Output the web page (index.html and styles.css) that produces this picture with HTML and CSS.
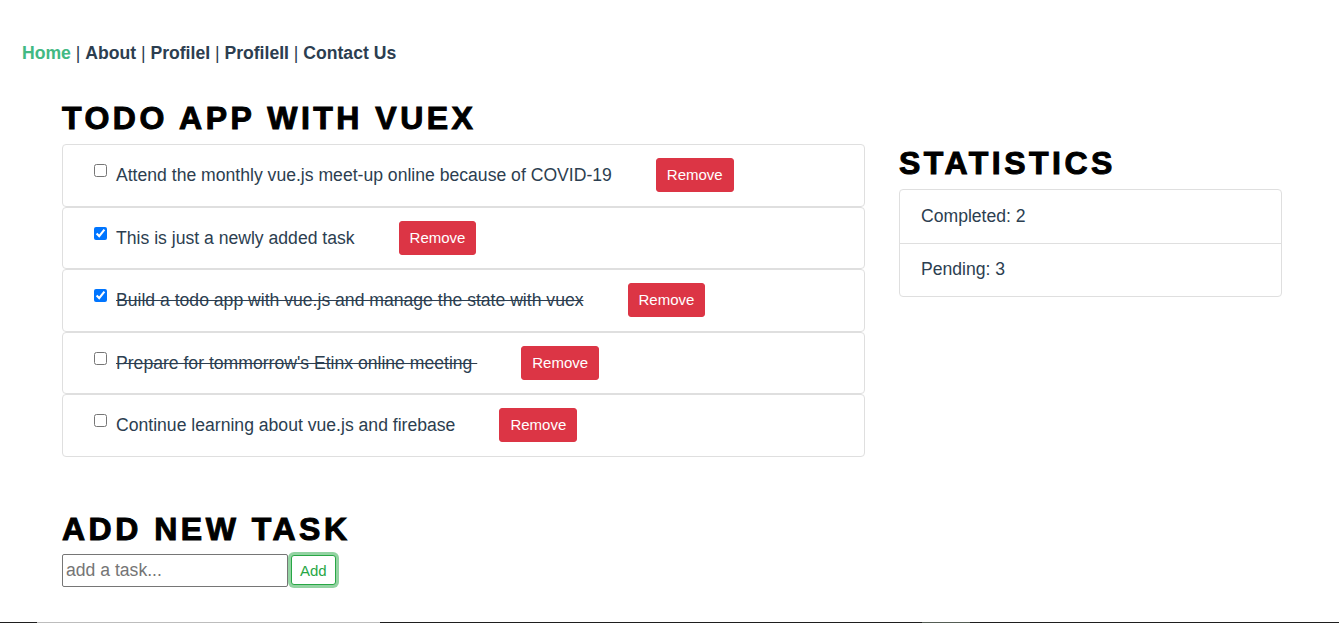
FILE: index.html
```html
<!DOCTYPE html>
<html lang="en">
<head>
<meta charset="utf-8">
<title>Todo App with Vuex</title>
<link rel="stylesheet" href="styles.css">
</head>
<body>
<div class="page">
  <nav class="nav">
    <a href="#" class="nav-link active">Home</a> | <a href="#" class="nav-link">About</a> | <a href="#" class="nav-link">ProfileI</a> | <a href="#" class="nav-link">ProfileII</a> | <a href="#" class="nav-link">Contact Us</a>
  </nav>

  <main class="main">
    <section class="col-left">
      <h1 class="title">TODO APP WITH VUEX</h1>
      <ul class="todo-list">
        <li class="todo-item">
          <label class="todo-label"><input type="checkbox" class="todo-check"><span class="todo-text">Attend the monthly vue.js meet-up online because of COVID-19</span></label>
          <button class="btn-remove">Remove</button>
        </li>
        <li class="todo-item">
          <label class="todo-label"><input type="checkbox" class="todo-check" checked><span class="todo-text">This is just a newly added task</span></label>
          <button class="btn-remove">Remove</button>
        </li>
        <li class="todo-item">
          <label class="todo-label"><input type="checkbox" class="todo-check" checked><span class="todo-text done">Build a todo app with vue.js and manage the state with vuex</span></label>
          <button class="btn-remove">Remove</button>
        </li>
        <li class="todo-item">
          <label class="todo-label"><input type="checkbox" class="todo-check"><span class="todo-text done">Prepare for tommorrow's Etinx online meeting&nbsp;</span></label>
          <button class="btn-remove">Remove</button>
        </li>
        <li class="todo-item">
          <label class="todo-label"><input type="checkbox" class="todo-check"><span class="todo-text">Continue learning about vue.js and firebase</span></label>
          <button class="btn-remove">Remove</button>
        </li>
      </ul>

      <h1 class="title title-add">ADD NEW TASK</h1>
      <form class="add-form" onsubmit="return false">
        <input type="text" class="add-input" placeholder="add a task...">
        <button type="submit" class="btn-add">Add</button>
      </form>
    </section>

    <aside class="col-right">
      <h1 class="title">STATISTICS</h1>
      <ul class="stats-list">
        <li class="stats-item">Completed: 2</li>
        <li class="stats-item">Pending: 3</li>
      </ul>
    </aside>
  </main>

  <div class="screen-edge">
    <span class="edge-seg edge-dark1"></span>
    <span class="edge-seg edge-light"></span>
    <span class="edge-seg edge-dark2"></span>
    <span class="edge-seg edge-mid"></span>
    <span class="edge-seg edge-dark3"></span>
  </div>
</div>
</body>
</html>
```

FILE: styles.css
```css
* { box-sizing: border-box; }

html, body {
  margin: 0;
  padding: 0;
  background: #ffffff;
}

body {
  font-family: "Liberation Sans", Arial, Helvetica, sans-serif;
  font-size: 17.6px;
  color: #2c3e50;
}

.page {
  min-height: 100vh;
  display: flex;
  flex-direction: column;
}

/* nav */
.nav {
  padding: 43px 22px 0;
  line-height: 20px;
  font-size: 17.6px;
  color: #2c3e50;
}
.nav-link {
  font-weight: bold;
  color: #2c3e50;
  text-decoration: none;
}
.nav-link.active { color: #42b983; }

/* main layout */
.main {
  display: grid;
  grid-template-columns: 803px 383px;
  column-gap: 34px;
  padding-left: 62px;
  margin-top: 36px;
  align-items: start;
}

.title {
  margin: 0 0 7px;
  font-size: 32px;
  line-height: 38px;
  font-weight: 900;
  letter-spacing: 3.5px;
  color: #000;
  -webkit-text-stroke: 1px #000;
}

.title-add { margin-top: 53px; }

.col-right { margin-top: 45px; }

/* todo list */
.todo-list {
  list-style: none;
  margin: 0;
  padding: 0;
}
.todo-item {
  display: flex;
  align-items: center;
  padding: 13.25px 20px 13.25px 27px;
  border: 1px solid #dfdfdf;
  border-radius: 4px;
  background: #fff;
}
.todo-label {
  display: flex;
  align-items: flex-start;
  line-height: 26px;
}
.todo-check {
  flex: none;
  margin: 2px 9px 0 4px;
  width: 13px;
  height: 13px;
}
.todo-text.done { text-decoration: line-through; }

.btn-remove {
  margin-left: 44px;
  font-family: "Liberation Sans", Arial, sans-serif;
  font-size: 15px;
  line-height: 22px;
  padding: 5px 10px;
  color: #fff;
  background: #dc3545;
  border: 1px solid #dc3545;
  border-radius: 3px;
  cursor: pointer;
}

/* stats */
.stats-list {
  list-style: none;
  margin: 0;
  padding: 0;
  border: 1px solid #dfdfdf;
  border-radius: 4px;
}
.stats-item {
  padding: 12.75px 21px 13.75px;
  line-height: 26px;
}
.stats-item + .stats-item { border-top: 1px solid #dfdfdf; }

/* add form */
.add-form {
  display: flex;
  align-items: center;
  margin-top: -1px;
}
.add-input {
  width: 226px;
  height: 33px;
  padding: 1px 3px;
  font-family: "Liberation Sans", Arial, sans-serif;
  font-size: 17.6px;
  color: #2c3e50;
  border: 1px solid #767676;
  border-radius: 2px;
  outline: none;
}
.add-input::placeholder { color: #757575; }
.btn-add {
  margin-left: 3px;
  height: 30px;
  padding: 0 8px;
  font-family: "Liberation Sans", Arial, sans-serif;
  font-size: 15px;
  color: #28a745;
  background: #fff;
  border: 1px solid #28a745;
  border-radius: 3px;
  box-shadow: 0 0 0 3px rgba(40, 167, 69, 0.5);
  cursor: pointer;
}

/* bottom screen edge */
.screen-edge {
  margin-top: auto;
  display: flex;
  height: 1px;
}
.edge-seg { display: block; height: 1px; }
.edge-dark1 { width: 37px; background: #1e1e1e; }
.edge-light { width: 343px; background: #bdbdbd; }
.edge-dark2 { width: 542px; background: #1e1e1e; }
.edge-mid { width: 48px; background: #555d55; }
.edge-dark3 { flex: 1; background: #1e1e1e; }
```
